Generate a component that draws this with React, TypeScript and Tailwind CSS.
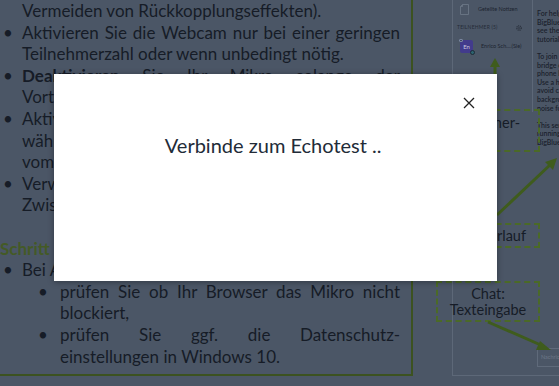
import React from "react";

const Bullet = ({ children, justify }: { children: React.ReactNode; justify?: boolean }) => (
  <div className="flex">
    <span className="w-[22px] shrink-0 pl-[3px]">•</span>
    <span className={"flex-1 whitespace-nowrap " + (justify ? "text-justify [text-align-last:justify]" : "")}>{children}</span>
  </div>
);

const Cont = ({ children, justify }: { children: React.ReactNode; justify?: boolean }) => (
  <div className={"pl-[22px] whitespace-nowrap " + (justify ? "text-justify [text-align-last:justify]" : "")}>{children}</div>
);

const SubBullet = ({ children, justify }: { children: React.ReactNode; justify?: boolean }) => (
  <div className="flex pl-[38px]">
    <span className="w-[22px] shrink-0">•</span>
    <span className={"flex-1 whitespace-nowrap " + (justify ? "text-justify [text-align-last:justify]" : "")}>{children}</span>
  </div>
);

const SubCont = ({ children, justify }: { children: React.ReactNode; justify?: boolean }) => (
  <div className={"pl-[60px] whitespace-nowrap " + (justify ? "text-justify [text-align-last:justify]" : "")}>{children}</div>
);

const chatLines = [
  "For help on using",
  "BigBlueButton see",
  "see these (short)",
  "tutorial videos.",
  "",
  "To join the audio",
  "bridge click the",
  "phone button.",
  "Use a headset to",
  "avoid causing",
  "background",
  "noise for others.",
  "",
  "This server is",
  "running",
  "BigBlueButton.",
];

export default function App() {
  return (
    <div className="relative w-[559px] h-[386px] overflow-hidden bg-[#4b5666] font-['Lato',sans-serif]">
      {/* page */}
      <div className="flex">
        {/* slide text column */}
        <div className="w-[413px] h-[376px] shrink-0 border-r-2 border-b-2 border-[#3c5220] pr-[11px] text-[17px] leading-[21.6px] text-[#161c27] overflow-hidden">
          <Cont>Vermeiden von Rückkopplungseffekten).</Cont>
          <Bullet justify>Aktivieren Sie die Webcam nur bei einer geringen</Bullet>
          <Cont>Teilnehmerzahl oder wenn unbedingt nötig.</Cont>
          <Bullet justify>
            <b>Deaktivieren</b> Sie Ihr Mikro solange der
          </Bullet>
          <Cont>Vortragende spricht.</Cont>
          <Bullet justify>Aktivieren Sie Ihr Mikro nur dann,</Bullet>
          <Cont justify>während Sie sprechen oder wenn Sie</Cont>
          <Cont>vom Moderator aufgefordert werden.</Cont>
          <Bullet justify>Verwenden Sie den Chat für Fragen und</Bullet>
          <Cont>Zwischenrufe.</Cont>
          <div className="h-[21.6px]" />
          <div className="font-bold text-[#445a26] whitespace-nowrap">Schritt 3: Audioprobleme</div>
          <Bullet>Bei Audioproblemen:</Bullet>
          <SubBullet justify>prüfen Sie ob Ihr Browser das Mikro nicht</SubBullet>
          <SubCont>blockiert,</SubCont>
          <SubBullet justify>prüfen Sie ggf. die Datenschutz-</SubBullet>
          <SubCont>einstellungen in Windows 10.</SubCont>
        </div>

        {/* right panel: screenshot of the conference UI */}
        <div className="flex h-[376px] flex-1">
          <div className="w-[39px] shrink-0" />
          <div className="flex flex-1 border-l border-b border-[#5d6878]">
            {/* user list */}
            <div className="w-[80px] shrink-0 border-r border-[#5d6878] h-[112px] text-[#1d2430]">
              <div className="flex items-center gap-[9px] pl-[7px] pt-[3px] h-[15px]">
                <svg width="9" height="11" viewBox="0 0 9 11" className="shrink-0">
                  <path d="M0.5 2.5 L2.5 0.5 L8.5 0.5 L8.5 10.5 L0.5 10.5 Z" fill="none" stroke="#6b7686" strokeWidth="0.9" />
                  <path d="M2.5 0.5 L2.5 2.5 L0.5 2.5" fill="none" stroke="#6b7686" strokeWidth="0.9" />
                </svg>
                <span className="text-[5.5px] whitespace-nowrap">Geteilte Notizen</span>
              </div>
              <div className="flex items-center justify-between pl-[4px] pr-[10px] mt-[8px] h-[10px]">
                <span className="text-[5px] tracking-[0.2px] text-[#252c38] whitespace-nowrap">TEILNEHMER (5)</span>
                <svg width="6" height="6" viewBox="0 0 6 6">
                  <circle cx="3" cy="3" r="2.2" fill="none" stroke="#262d38" strokeWidth="1.2" strokeDasharray="1 0.7" />
                  <circle cx="3" cy="3" r="0.8" fill="#262d38" />
                </svg>
              </div>
              <div className="flex items-center gap-[8px] pl-[7px] mt-[7px]">
                <div className="relative w-[13px] h-[13px] shrink-0 rounded-[2px] bg-[#423b8c] flex items-center justify-center">
                  <span className="text-[6px] text-[#c9c8e0] leading-none">En</span>
                  <span className="absolute -left-[1px] -top-[1px] w-[4px] h-[3px] rounded-[1px] border border-[#7a86a0] bg-[#3d4660]" />
                  <span className="absolute -right-[2px] -bottom-[2px] w-[5px] h-[5px] rounded-full bg-[#2b6470] border border-[#1d2a36]" />
                </div>
                <span className="text-[5.5px] whitespace-nowrap">Enrico Sch....(Sie)</span>
              </div>
            </div>
            {/* chat column */}
            <div className="flex flex-1 flex-col overflow-hidden pl-[4px]">
              <div className="pt-[9px] text-[7px] leading-[8.6px] font-semibold text-[#1b222d] whitespace-nowrap">
                {chatLines.map((l, i) => (
                  <div key={i} className="h-[8.6px]">{l}</div>
                ))}
              </div>
              <div className="flex-1" />
              <div className="mb-[8px] h-[19px] border border-[#5f6a7a] whitespace-nowrap overflow-hidden pl-[3px] text-[5.5px] leading-[17px] text-[#6b7686]">
                Nachricht an...
              </div>
            </div>
          </div>
        </div>
      </div>

      {/* callouts of the slide diagram */}
      <div className="absolute left-[425px] top-[109px] w-[115px] h-[43px] border-2 border-dashed border-[#4b6a27] flex flex-col items-center justify-center text-[14.5px] leading-[16px] text-[#161c27]">
        <span>Teilnehmer-</span>
        <span>liste</span>
      </div>
      <div className="absolute left-[438px] top-[223px] w-[102px] h-[25px] border-2 border-dashed border-[#4b6a27] flex items-center justify-center text-[14.5px] leading-[16px] text-[#161c27]">
        <span>Chatverlauf</span>
      </div>
      <div className="absolute left-[436px] top-[281px] w-[104px] h-[41px] border-2 border-dashed border-[#4b6a27] flex flex-col items-center justify-center text-[14.5px] leading-[16px] text-[#161c27]">
        <span>Chat:</span>
        <span>Texteingabe</span>
      </div>
      <svg className="absolute left-0 top-0 pointer-events-none" width="559" height="386" viewBox="0 0 559 386">
        <g stroke="#3f5c1d" strokeWidth="3" fill="#3f5c1d">
          <line x1="495" y1="80" x2="495" y2="66" />
          <polygon points="495,58 490,67 500,67" stroke="none" />
          <line x1="497" y1="215" x2="551" y2="164" />
          <polygon points="557,158 545,162 553,170" stroke="none" />
          <line x1="488" y1="322" x2="543" y2="346" />
          <polygon points="551,350 540,341 536,350" stroke="none" />
        </g>
      </svg>

      {/* modal */}
      <div className="absolute left-[54px] top-[74px] w-[443px] h-[207px] bg-white shadow-[0_1px_6px_rgba(0,0,0,0.35)]">
        <div className="flex justify-end pt-[23px] pr-[22px]">
          <svg width="12" height="12" viewBox="0 0 12 12">
            <path d="M1 1 L11 11 M11 1 L1 11" stroke="#222" strokeWidth="1.3" fill="none" />
          </svg>
        </div>
        <div className="mt-[24px] text-center text-[20px] leading-[24px] text-[#222b38] whitespace-nowrap">
          Verbinde zum Echotest ..<span className="invisible">.</span>
        </div>
      </div>
    </div>
  );
}
